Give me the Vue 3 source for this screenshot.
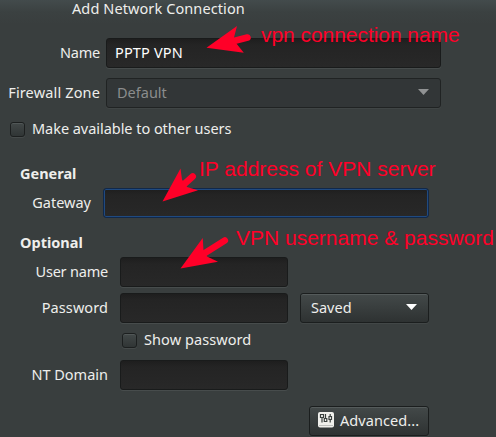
<script setup>
const notes = [
  { cls: 'note-name', text: 'vpn connection name' },
  { cls: 'note-gateway', text: 'IP address of VPN server' },
  { cls: 'note-user', text: 'VPN username & password' }
]
</script>

<template>
  <main class="dialog">
    <h1 class="title">Add Network Connection</h1>

    <div class="row top-row name-row">
      <label class="t-name">Name</label>
      <div class="entry"><span class="t-value">PPTP VPN</span></div>
    </div>
    <div class="row top-row zone-row">
      <label class="t-zone">Firewall Zone</label>
      <div class="entry disabled"><span>Default</span><i class="caret dim"></i></div>
    </div>
    <div class="check-row share-row">
      <span class="checkbox"></span><label class="t-share">Make available to other users</label>
    </div>

    <h2 class="general"><span>General</span></h2>
    <div class="row gateway-row">
      <label>Gateway</label>
      <div class="entry focused"></div>
    </div>

    <h2 class="optional"><span>Optional</span></h2>
    <div class="row opt-row">
      <label class="t-user">User name</label>
      <div class="entry"></div>
    </div>
    <div class="row opt-row password-row">
      <label class="t-pass">Password</label>
      <div class="entry"></div>
      <div class="button select"><span>Saved</span><i class="caret"></i></div>
    </div>
    <div class="check-row show-row">
      <span class="checkbox"></span><label class="t-show">Show password</label>
    </div>
    <div class="row opt-row domain-row">
      <label>NT Domain</label>
      <div class="entry"></div>
    </div>

    <footer class="actions">
      <div class="button advanced">
        <svg width="16" height="16" viewBox="0 0 16 16">
          <rect x="0" y="0" width="16" height="15.500" rx="2" fill="#f0f0ec" />
          <rect x="1" y="13" width="14" height="1" fill="#c0c1be" />
          <g fill="none" stroke="#3a403e" stroke-width="1.200">
            <path d="M2.500 2.500h3v3h-3zM4 5.500v5M7.500 2v4.500M6.300 6.500h2.500v3h-2.500zM11 4.500h2.500v3h-2.500zM12.200 2v2.500M12.200 7.500v3" />
          </g>
        </svg>
        <span class="t-advanced">Advanced...</span>
      </div>
    </footer>

    <svg class="arrows" width="496" height="437" viewBox="0 0 496 437">
      <g class="heads">
        <path d="M206.500 47.700 L237 26 L234 37.500 L236 43 L243.800 52.800 Z" />
        <path d="M162.500 201.500 L180.500 168.500 L182 179.500 L187 187 L198 190.300 Z" />
        <path d="M180.500 268.500 L202.700 238 L203.500 250 L207 256.500 L218 261.800 Z" />
      </g>
      <g class="shafts">
        <path d="M231 41.800 L247.500 37.500" />
        <path d="M181 187 L192.700 176.500" />
        <path d="M201 255.500 L224.800 240.500" />
      </g>
    </svg>
    <span v-for="n in notes" :key="n.cls" class="note" :class="n.cls">{{ n.text }}</span>
  </main>
</template>

<style>
body { margin: 0; background: #393e3e; }
</style>

<style scoped>
* { box-sizing: border-box; }
.dialog {
  position: relative;
  width: 496px;
  height: 437px;
  overflow: hidden;
  display: flex;
  flex-direction: column;
  background: linear-gradient(#434b4c 0, #3b4141 12px, #393e3e 24px, #393e3e 100%);
  color: #eeeeec;
  font: 14.5px/20px "Noto Sans", "Open Sans", sans-serif;
  white-space: nowrap;
}
.title { margin: 0; height: 38px; padding: 0 0 0 72px; font-size: 14.5px; font-weight: 400; line-height: 17px; letter-spacing: 0.1px; }
h2 { margin: 0; padding-left: 20px; height: 20px; font-size: 14.5px; font-weight: 700; line-height: 18px; }
.row { display: flex; align-items: center; height: 30px; flex: none; }
.row label { text-align: right; flex: none; }
.row label, .entry span, .check-row label, .button span { padding-bottom: 2px; }
.t-zone { letter-spacing: 0.15px; }
.t-value { letter-spacing: 0.15px; color: #fff; }
.t-share { letter-spacing: -0.04px; }
.t-user { letter-spacing: -0.2px; }
.t-pass, .t-show, .t-advanced { letter-spacing: 0.08px; }
.t-name { letter-spacing: -0.2px; }
.top-row label { width: 100px; margin-right: 6px; }
.top-row .entry { width: 335px; }
.zone-row { margin-top: 10px; }
.entry {
  display: flex;
  align-items: center;
  height: 30px;
  padding: 0 8px;
  border: 1px solid #191b1b;
  border-radius: 3px;
  background: linear-gradient(#1e1e1e, #242424 6px, #282828);
  box-shadow: 0 1px 0 #474c4c;
}
.entry.disabled {
  justify-content: space-between;
  padding: 0 11px 0 10px;
  color: #8b8d8d;
  border-color: #202323;
  background: #323637;
  box-shadow: 0 1px 0 #404545;
}
.entry.focused { border-color: #112849; box-shadow: inset 0 0 0 1px #204a80; }
.caret { width: 11px; height: 6px; margin-bottom: 2px; background: #fff; clip-path: polygon(0 0, 100% 0, 50% 100%); }
.caret.dim { background: #909293; }
.check-row { display: flex; align-items: center; height: 20px; }
.checkbox {
  width: 15px;
  height: 15px;
  border: 1px solid #1c1f1f;
  border-radius: 3px;
  background: linear-gradient(#424848, #303535);
  box-shadow: inset 0 1px 0 #515757, 0 1px 0 #464b4b;
}
.share-row { margin-top: 11px; padding-left: 10px; gap: 7px; }
.general { margin-top: 25px; }
.gateway-row { margin-top: 4px; }
.gateway-row label { width: 91px; margin-right: 12px; }
.gateway-row .entry { width: 326px; }
.optional { margin-top: 15px; }
.opt-row label { width: 108px; margin-right: 12px; }
.opt-row .entry { width: 168px; }
.optional + .opt-row { margin-top: 4px; }
.password-row { margin-top: 6px; }
.show-row { margin-top: 7px; padding-left: 122px; gap: 7px; }
.domain-row { margin-top: 10px; }
.button {
  display: flex;
  align-items: center;
  height: 30px;
  border: 1px solid #1b1e1e;
  border-radius: 3px;
  background: linear-gradient(#434949, #2e3232);
  box-shadow: inset 0 1px 0 #555b5b, 0 1px 0 #424747;
}
.select { width: 129px; margin-left: 12px; padding: 0 11px 0 10px; justify-content: space-between; }
.actions { display: flex; justify-content: flex-end; margin-top: 16px; padding-right: 67px; }
.advanced { width: 120px; padding-left: 8px; gap: 6px; }
.advanced svg { margin-bottom: 2px; }
.arrows { position: absolute; left: 0; top: 0; pointer-events: none; }
.heads { fill: #ff0028; }
.shafts { fill: none; stroke: #ff0028; stroke-width: 6.6px; stroke-linecap: round; }
.note { position: absolute; color: #ff0028; font: 21px/24px "Liberation Sans", Arial, sans-serif; }
.note-name { left: 261px; top: 23px; letter-spacing: -0.05px; }
.note-gateway { left: 199px; top: 157px; }
.note-user { left: 236px; top: 226px; }
</style>
